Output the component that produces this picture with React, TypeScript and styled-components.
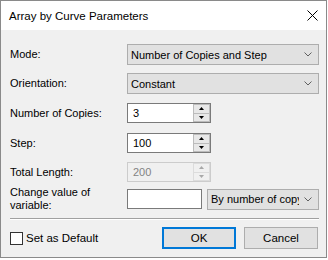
import React from 'react';
import styled, { createGlobalStyle } from 'styled-components';

const GlobalStyle = createGlobalStyle`
  html, body {
    margin: 0;
    padding: 0;
    background: #ffffff;
  }
  body {
    font-family: 'Liberation Sans', Arial, sans-serif;
    font-size: 11px;
    color: #000000;
  }
`;

const Window = styled.div`
  box-sizing: border-box;
  width: 327px;
  height: 258px;
  border: 1px solid #8a8a8a;
  background: #f0f0f0;
  display: flex;
  flex-direction: column;
`;

const TitleBar = styled.div`
  height: 29px;
  background: #ffffff;
  display: flex;
  align-items: center;
  padding-left: 8px;
  padding-right: 8px;
  font-size: 11.5px;
`;

const Title = styled.span`
  flex: 1;
`;

const CloseButton = styled.svg`
  display: block;
  margin-right: 0;
`;

const Body = styled.div`
  flex: 1;
  display: flex;
  flex-direction: column;
  padding: 14px 7px 0 9px;
`;

const Row = styled.div<{ $top: number; $height: number }>`
  display: flex;
  align-items: center;
  margin-top: ${(p) => p.$top}px;
  height: ${(p) => p.$height}px;
`;

const Label = styled.div`
  width: 117px;
  flex-shrink: 0;
  line-height: 13px;
`;

const Select = styled.div<{ $width: number }>`
  box-sizing: border-box;
  width: ${(p) => p.$width}px;
  height: 21px;
  border: 1px solid #adadad;
  background: #e1e1e1;
  display: flex;
  align-items: center;
  padding-left: 3px;
`;

const SelectText = styled.span`
  flex: 1;
  overflow: hidden;
  white-space: nowrap;
`;

const Chevron = styled.svg`
  display: block;
  flex-shrink: 0;
  margin: 0 6px 0 5px;
`;

const SpinBox = styled.div<{ $disabled?: boolean }>`
  box-sizing: border-box;
  width: 84px;
  height: 20px;
  border: 1px solid ${(p) => (p.$disabled ? '#cccccc' : '#7a7a7a')};
  background: ${(p) => (p.$disabled ? '#f0f0f0' : '#ffffff')};
  color: ${(p) => (p.$disabled ? '#838383' : '#000000')};
  display: flex;
`;

const SpinValue = styled.div`
  flex: 1;
  display: flex;
  align-items: center;
  padding-left: 5px;
`;

const SpinButtons = styled.div`
  width: 17px;
  display: flex;
  flex-direction: column;
`;

const SpinButton = styled.div<{ $disabled?: boolean }>`
  box-sizing: border-box;
  flex: 1;
  border: 1px solid ${(p) => (p.$disabled ? '#dcdcdc' : '#bcbcbc')};
  background: ${(p) => (p.$disabled ? '#f0f0f0' : '#e8e8e8')};
  display: flex;
  align-items: center;
  justify-content: center;
  & + & {
    border-top: none;
  }
`;

const TextBox = styled.div`
  box-sizing: border-box;
  width: 75px;
  height: 20px;
  border: 1px solid #7a7a7a;
  background: #ffffff;
  margin-right: 5px;
`;

const Separator = styled.div`
  margin-top: 8px;
  height: 1px;
  background: #a0a0a0;
  border-bottom: 1px solid #ffffff;
`;

const Footer = styled.div`
  display: flex;
  align-items: center;
  margin-top: 7px;
  height: 22px;
  padding-right: 1px;
`;

const CheckLabel = styled.label`
  display: flex;
  align-items: center;
  gap: 3px;
  flex: 1;
  font-size: 11.5px;
`;

const CheckBox = styled.span`
  box-sizing: border-box;
  width: 13px;
  height: 13px;
  border: 1px solid #333333;
  background: #ffffff;
`;

const Button = styled.div<{ $primary?: boolean }>`
  box-sizing: border-box;
  width: 74px;
  height: 22px;
  margin-left: 8px;
  border: ${(p) => (p.$primary ? '2px solid #0078d7' : '1px solid #adadad')};
  background: #e1e1e1;
  display: flex;
  align-items: center;
  justify-content: center;
  font-size: 11.5px;
`;

const ChevronIcon = () => (
  <Chevron width="8" height="5" viewBox="0 0 8 5">
    <path d="M0.5 0.5 L4 4 L7.5 0.5" fill="none" stroke="#606060" strokeWidth="1" />
  </Chevron>
);

const Arrow = ({ up, color }: { up?: boolean; color: string }) => (
  <svg width="5" height="3" viewBox="0 0 5 3" style={{ display: 'block' }}>
    <path d={up ? 'M2.5 0 L5 3 L0 3 Z' : 'M0 0 L5 0 L2.5 3 Z'} fill={color} />
  </svg>
);

const Spin = ({ value, disabled }: { value: string; disabled?: boolean }) => (
  <SpinBox $disabled={disabled}>
    <SpinValue>{value}</SpinValue>
    <SpinButtons>
      <SpinButton $disabled={disabled}>
        <Arrow up color={disabled ? '#a8a8a8' : '#000000'} />
      </SpinButton>
      <SpinButton $disabled={disabled}>
        <Arrow color={disabled ? '#a8a8a8' : '#000000'} />
      </SpinButton>
    </SpinButtons>
  </SpinBox>
);

const App = () => {
  return (
    <>
      <GlobalStyle />
      <Window>
        <TitleBar>
          <Title>Array by Curve Parameters</Title>
          <CloseButton width="11" height="11" viewBox="0 0 11 11">
            <path d="M0.5 0.5 L10.5 10.5 M10.5 0.5 L0.5 10.5" stroke="#000000" strokeWidth="1" />
          </CloseButton>
        </TitleBar>
        <Body>
          <Row $top={0} $height={21}>
            <Label>Mode:</Label>
            <Select $width={192}>
              <SelectText>Number of Copies and Step</SelectText>
              <ChevronIcon />
            </Select>
          </Row>
          <Row $top={8} $height={21}>
            <Label>Orientation:</Label>
            <Select $width={192}>
              <SelectText>Constant</SelectText>
              <ChevronIcon />
            </Select>
          </Row>
          <Row $top={9} $height={20}>
            <Label>Number of Copies:</Label>
            <Spin value="3" />
          </Row>
          <Row $top={10} $height={20}>
            <Label>Step:</Label>
            <Spin value="100" />
          </Row>
          <Row $top={9} $height={20}>
            <Label>Total Length:</Label>
            <Spin value="200" disabled />
          </Row>
          <Row $top={6} $height={22}>
            <Label>
              Change value of
              <br />
              variable:
            </Label>
            <TextBox />
            <Select $width={112}>
              <SelectText>By number of copy</SelectText>
              <ChevronIcon />
            </Select>
          </Row>
          <Separator />
          <Footer>
            <CheckLabel>
              <CheckBox />
              Set as Default
            </CheckLabel>
            <Button $primary>OK</Button>
            <Button>Cancel</Button>
          </Footer>
        </Body>
      </Window>
    </>
  );
};

export default App;
